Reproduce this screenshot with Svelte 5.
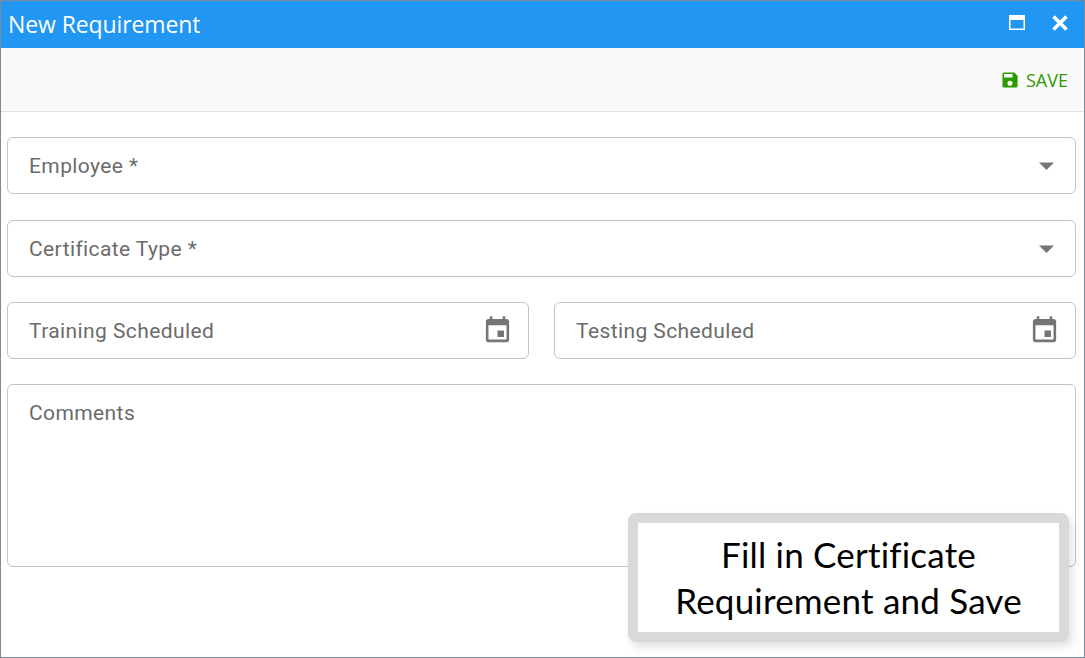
<script>
	const rows = [
		{ id: 'employee', label: 'Employee *' },
		{ id: 'cert', label: 'Certificate Type *' }
	];
	const dates = ['Training Scheduled', 'Testing Scheduled'];
</script>

<div class="window">
	<header class="titlebar">
		<span class="title">New Requirement</span>
		<div class="controls">
			<svg width="18" height="18" viewBox="0 0 18 18" class="max">
				<path d="M1 1h16v15H1z M2.500 6v8.500h13V6z" fill="#fff" fill-rule="evenodd" />
			</svg>
			<svg width="18" height="18" viewBox="0 0 18 18" class="close">
				<path d="M2.500 2.500l13 13M15.500 2.500l-13 13" stroke="#fff" stroke-width="3.600" fill="none" />
			</svg>
		</div>
	</header>

	<div class="toolbar">
		<button class="save">
			<svg width="16" height="16" viewBox="2.500 2.500 19 19">
				<path d="M17 3H5a2 2 0 0 0-2 2v14a2 2 0 0 0 2 2h14a2 2 0 0 0 2-2V7l-4-4zm-5 16a3 3 0 1 1 0-6 3 3 0 0 1 0 6zm3-10H5V5h10v4z" fill="#2e9a00" />
			</svg>
			<span>SAVE</span>
		</button>
	</div>

	<form class="form">
		{#each rows as row}
			<div class="field">
				<span class="label">{row.label}</span>
				<svg class="arrow" width="15" height="8" viewBox="0 0 15 8"><path d="M0 0.500h15L7.500 8z" fill="#757575" /></svg>
			</div>
		{/each}
		<div class="dates">
			{#each dates as d}
				<div class="field">
					<span class="label">{d}</span>
					<svg class="cal" width="31" height="31" viewBox="0 0 24 24">
						<path d="M17 12h-5v5h5v-5zM16 1v2H8V1H6v2H5a2 2 0 0 0-2 2v14a2 2 0 0 0 2 2h14a2 2 0 0 0 2-2V5a2 2 0 0 0-2-2h-1V1h-2zm3 18H5V8h14v11z" fill="#757575" />
					</svg>
				</div>
			{/each}
		</div>
		<div class="field comments">
			<span class="label">Comments</span>
		</div>
	</form>

	<div class="callout">Fill in Certificate<br />Requirement and Save</div>
</div>

<style>
	:global(body) {
		margin: 0;
		background: #fff;
	}

	.window {
		position: relative;
		box-sizing: border-box;
		width: 1085px;
		height: 658px;
		border: 1px solid #7b8a99;
		overflow: hidden;
		background: #fff;
	}

	.titlebar {
		height: 47px;
		background: #2196f3;
		color: #fff;
		display: flex;
		align-items: center;
		justify-content: space-between;
		padding: 0 15px 0 7px;
	}

	.title {
		font-family: "Open Sans", sans-serif;
		font-size: 23px;
		letter-spacing: -0.1px;
		margin-top: -1px;
	}

	.controls {
		display: flex;
		align-items: center;
		gap: 25px;
		margin-top: -3px;
	}

	.toolbar {
		box-sizing: border-box;
		height: 64px;
		background: #fafafa;
		border-bottom: 1px solid #e2e2e2;
		display: flex;
		align-items: center;
		justify-content: flex-end;
		padding: 0 16px 0 0;
	}

	.save {
		display: flex;
		align-items: center;
		gap: 8px;
		border: 0;
		padding: 0;
		background: none;
		color: #2e9a00;
		font-family: "Open Sans", sans-serif;
		font-size: 18px;
	}

	.form {
		padding: 25px 8px 0 6px;
		display: flex;
		flex-direction: column;
		gap: 25px;
	}

	.field {
		box-sizing: border-box;
		height: 57px;
		border: 1px solid #c4c4c4;
		border-radius: 6px;
		padding: 0 21px 0 21px;
		display: flex;
		align-items: center;
		justify-content: space-between;
	}

	.form > .field:first-child {
		margin-bottom: 1px;
	}

	.label {
		font-family: Roboto, sans-serif;
		font-size: 21px;
		letter-spacing: 0.4px;
		color: #6b6b6b;
	}

	.dates {
		display: flex;
		gap: 25px;
	}

	.dates .field {
		flex: 1;
		padding-right: 15px;
	}

	.comments {
		height: 183px;
		align-items: flex-start;
		padding-top: 16px;
	}

	.callout {
		position: absolute;
		left: 627px;
		top: 512px;
		box-sizing: border-box;
		width: 441px;
		height: 129px;
		border: 10px solid #d9d9d9;
		border-radius: 8px;
		background: #fff;
		box-shadow: 3px 5px 10px rgba(0, 0, 0, 0.12);
		font-family: Lato, sans-serif;
		font-size: 35px;
		letter-spacing: 0.2px;
		line-height: 46px;
		padding-bottom: 2px;
		color: #000;
		text-align: center;
		display: flex;
		align-items: center;
		justify-content: center;
	}
</style>
